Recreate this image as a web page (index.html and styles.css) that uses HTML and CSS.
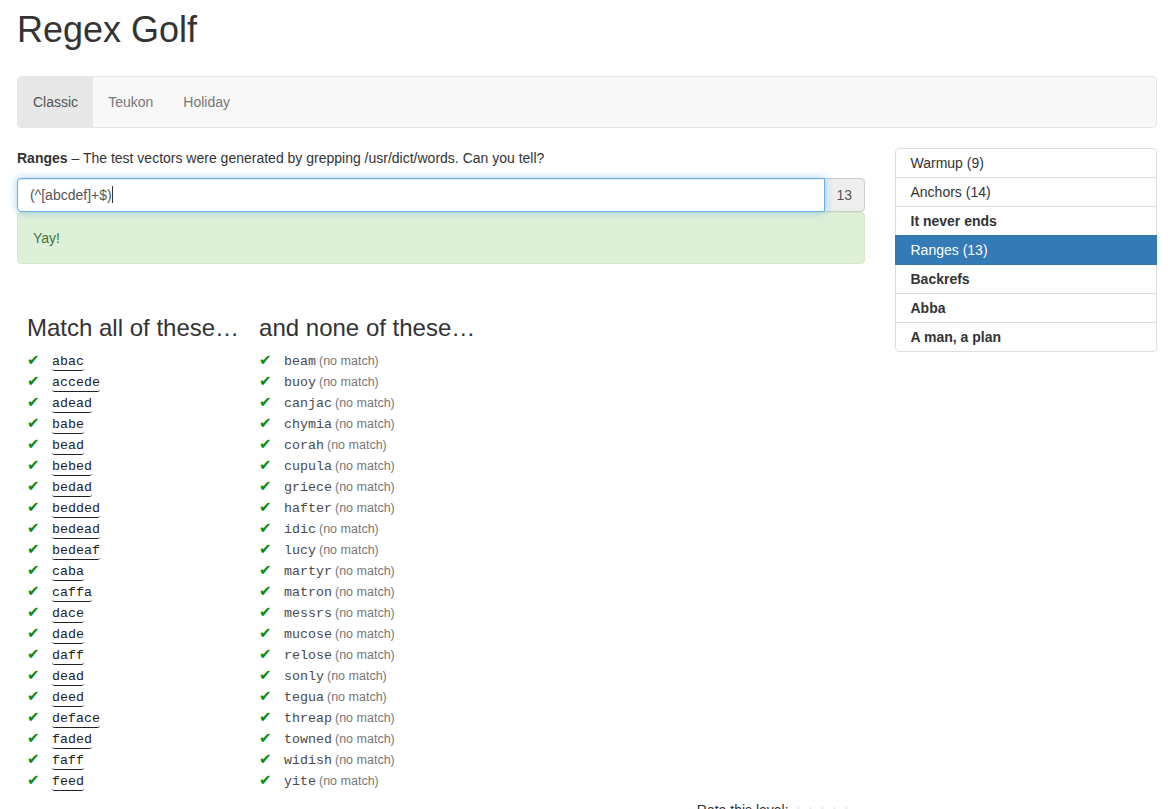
FILE: index.html
```html
<!DOCTYPE html>
<html>
<head>
<meta charset="utf-8">
<title>Regex Golf</title>
<link rel="stylesheet" href="styles.css">
</head>
<body>
<div class="container">
  <h1 class="title">Regex Golf</h1>
  <nav class="navbar">
    <a class="nav-link active">Classic</a>
    <a class="nav-link">Teukon</a>
    <a class="nav-link">Holiday</a>
  </nav>
  <div class="row">
    <div class="main">
      <p class="desc"><b>Ranges</b> – The test vectors were generated by grepping /usr/dict/words. Can you tell?</p>
      <div class="input-group">
        <div class="regex-input">(^[abcdef]+$)<span class="caret"></span></div>
        <span class="addon">13</span>
      </div>
      <div class="alert">Yay!</div>
      <div class="lists">
        <div class="col col-match">
          <h3>Match all of these…</h3>
          <ul class="words">
            <li><span class="ok">✔</span><span class="w hit">abac</span></li>
            <li><span class="ok">✔</span><span class="w hit">accede</span></li>
            <li><span class="ok">✔</span><span class="w hit">adead</span></li>
            <li><span class="ok">✔</span><span class="w hit">babe</span></li>
            <li><span class="ok">✔</span><span class="w hit">bead</span></li>
            <li><span class="ok">✔</span><span class="w hit">bebed</span></li>
            <li><span class="ok">✔</span><span class="w hit">bedad</span></li>
            <li><span class="ok">✔</span><span class="w hit">bedded</span></li>
            <li><span class="ok">✔</span><span class="w hit">bedead</span></li>
            <li><span class="ok">✔</span><span class="w hit">bedeaf</span></li>
            <li><span class="ok">✔</span><span class="w hit">caba</span></li>
            <li><span class="ok">✔</span><span class="w hit">caffa</span></li>
            <li><span class="ok">✔</span><span class="w hit">dace</span></li>
            <li><span class="ok">✔</span><span class="w hit">dade</span></li>
            <li><span class="ok">✔</span><span class="w hit">daff</span></li>
            <li><span class="ok">✔</span><span class="w hit">dead</span></li>
            <li><span class="ok">✔</span><span class="w hit">deed</span></li>
            <li><span class="ok">✔</span><span class="w hit">deface</span></li>
            <li><span class="ok">✔</span><span class="w hit">faded</span></li>
            <li><span class="ok">✔</span><span class="w hit">faff</span></li>
            <li><span class="ok">✔</span><span class="w hit">feed</span></li>
          </ul>
        </div>
        <div class="col col-none">
          <h3>and none of these…</h3>
          <ul class="words">
            <li><span class="ok">✔</span><span class="w">beam</span> <span class="nm">(no match)</span></li>
            <li><span class="ok">✔</span><span class="w">buoy</span> <span class="nm">(no match)</span></li>
            <li><span class="ok">✔</span><span class="w">canjac</span> <span class="nm">(no match)</span></li>
            <li><span class="ok">✔</span><span class="w">chymia</span> <span class="nm">(no match)</span></li>
            <li><span class="ok">✔</span><span class="w">corah</span> <span class="nm">(no match)</span></li>
            <li><span class="ok">✔</span><span class="w">cupula</span> <span class="nm">(no match)</span></li>
            <li><span class="ok">✔</span><span class="w">griece</span> <span class="nm">(no match)</span></li>
            <li><span class="ok">✔</span><span class="w">hafter</span> <span class="nm">(no match)</span></li>
            <li><span class="ok">✔</span><span class="w">idic</span> <span class="nm">(no match)</span></li>
            <li><span class="ok">✔</span><span class="w">lucy</span> <span class="nm">(no match)</span></li>
            <li><span class="ok">✔</span><span class="w">martyr</span> <span class="nm">(no match)</span></li>
            <li><span class="ok">✔</span><span class="w">matron</span> <span class="nm">(no match)</span></li>
            <li><span class="ok">✔</span><span class="w">messrs</span> <span class="nm">(no match)</span></li>
            <li><span class="ok">✔</span><span class="w">mucose</span> <span class="nm">(no match)</span></li>
            <li><span class="ok">✔</span><span class="w">relose</span> <span class="nm">(no match)</span></li>
            <li><span class="ok">✔</span><span class="w">sonly</span> <span class="nm">(no match)</span></li>
            <li><span class="ok">✔</span><span class="w">tegua</span> <span class="nm">(no match)</span></li>
            <li><span class="ok">✔</span><span class="w">threap</span> <span class="nm">(no match)</span></li>
            <li><span class="ok">✔</span><span class="w">towned</span> <span class="nm">(no match)</span></li>
            <li><span class="ok">✔</span><span class="w">widish</span> <span class="nm">(no match)</span></li>
            <li><span class="ok">✔</span><span class="w">yite</span> <span class="nm">(no match)</span></li>
          </ul>
        </div>
      </div>
      <div class="rate">Rate this level: <span class="stars">☆☆☆☆☆</span></div>
    </div>
    <div class="side">
      <ul class="list-group">
        <li class="lg-item">Warmup (9)</li>
        <li class="lg-item">Anchors (14)</li>
        <li class="lg-item bold">It never ends</li>
        <li class="lg-item active">Ranges (13)</li>
        <li class="lg-item bold">Backrefs</li>
        <li class="lg-item bold">Abba</li>
        <li class="lg-item bold">A man, a plan</li>
      </ul>
    </div>
  </div>
</div>
</body>
</html>
```
FILE: styles.css
```css
* { box-sizing: border-box; }
html, body { margin: 0; padding: 0; }
body {
  font-family: "Liberation Sans", Arial, Helvetica, sans-serif;
  font-size: 14px;
  line-height: 20px;
  color: #333;
  background: #fff;
}
.container {
  width: 1170px;
  margin: 0 2px;
  padding: 0 15px;
}
.title {
  font-size: 36px;
  font-weight: 500;
  line-height: 39.6px;
  margin: 10px 0 26px;
  color: #333;
}
.navbar {
  display: flex;
  height: 52px;
  background: #f8f8f8;
  border: 1px solid #e7e7e7;
  border-radius: 4px;
  margin-bottom: 20px;
  overflow: hidden;
}
.nav-link {
  display: block;
  padding: 15px;
  line-height: 20px;
  color: #777;
}
.nav-link.active {
  background: #e7e7e7;
  color: #555;
}
.row {
  display: flex;
  margin: 0 -15px;
}
.main {
  width: 877.5px;
  padding: 0 15px;
}
.side {
  width: 292.5px;
  padding: 0 15px;
}
.desc {
  margin: 0 0 10px;
}
.input-group {
  display: flex;
  height: 34px;
}
.regex-input {
  flex: 1;
  height: 34px;
  padding: 6px 12px;
  line-height: 20px;
  border: 1px solid #66afe9;
  border-radius: 4px 0 0 4px;
  box-shadow: inset 0 1px 1px rgba(0,0,0,.075), 0 0 8px rgba(102,175,233,.6);
  color: #555;
  background: #fff;
  position: relative;
  z-index: 1;
}
.caret {
  display: inline-block;
  width: 1px;
  height: 17px;
  background: #333;
  vertical-align: -3px;
}
.addon {
  width: 41px;
  margin-left: -1px;
  padding: 6px 12px;
  text-align: center;
  line-height: 20px;
  color: #555;
  background: #eee;
  border: 1px solid #ccc;
  border-radius: 0 4px 4px 0;
}
.alert {
  padding: 15px;
  background: #dff0d8;
  border: 1px solid #d6e9c6;
  border-radius: 4px;
  color: #3c763d;
  margin-bottom: 20px;
}
.lists {
  display: flex;
  padding-top: 31px;
}
.col {
  padding: 0 10px;
}
.col h3 {
  font-size: 24px;
  font-weight: 500;
  line-height: 26.4px;
  margin: 0 0 9px;
  color: #333;
}
.words {
  list-style: none;
  margin: 0;
  padding: 0;
}
.words li {
  height: 21px;
  line-height: 21px;
  white-space: nowrap;
}
.ok {
  display: inline-block;
  width: 25px;
  color: #0a8a0a;
  font-family: "DejaVu Sans", sans-serif;
  font-size: 15px;
  vertical-align: top;
}
.w {
  font-family: "Liberation Mono", "Courier New", monospace;
  font-size: 13.33px;
  color: #4a4a4a;
}
.w.hit {
  color: #222;
  border-bottom: 1.5px solid #222;
  border-radius: 0 0 3px 3px;
  padding-bottom: 1px;
}
.nm {
  font-size: 12.5px;
  color: #777;
  margin-left: -1px;
}
.rate {
  text-align: right;
  padding: 9px 12px 0 0;
  color: #333;
}
.stars {
  color: #ccc;
  letter-spacing: 1px;
  font-size: 12px;
}
.list-group {
  list-style: none;
  margin: 0;
  padding: 0;
}
.lg-item {
  padding: 4px 15px;
  line-height: 20px;
  border: 1px solid #ddd;
  margin-bottom: -1px;
  background: #fff;
  color: #333;
}
.lg-item:first-child { border-radius: 4px 4px 0 0; }
.lg-item:last-child { border-radius: 0 0 4px 4px; margin-bottom: 0; }
.lg-item.bold { font-weight: bold; }
.lg-item.active {
  background: #337ab7;
  border-color: #337ab7;
  color: #fff;
  position: relative;
  z-index: 1;
}
```
